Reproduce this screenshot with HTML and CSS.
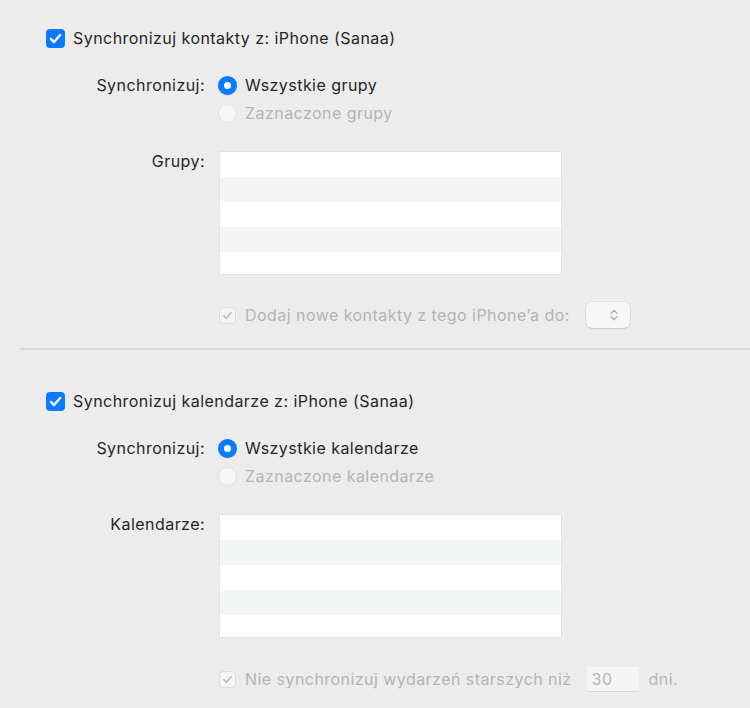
FILE: index.html
```html
<!DOCTYPE html>
<html lang="pl">
<head>
<meta charset="utf-8">
<link rel="stylesheet" href="styles.css">
</head>
<body>
<div class="page">
  <section class="section first">
    <div class="head">
      <span class="cb on"><svg viewBox="0 0 18 18"><path d="M4.6 9.4 L7.6 12.4 L13.4 5.6" /></svg></span>
      <span class="text">Synchronizuj kontakty z: iPhone (Sanaa)</span>
    </div>
    <div class="row radios">
      <div class="label">Synchronizuj:</div>
      <div class="ctrls">
        <div class="opt"><span class="radio on"></span><span class="text">Wszystkie grupy</span></div>
        <div class="opt dis"><span class="radio"></span><span class="text">Zaznaczone grupy</span></div>
      </div>
    </div>
    <div class="row listrow">
      <div class="label">Grupy:</div>
      <div class="list"><div></div><div></div><div></div><div></div><div></div></div>
    </div>
    <div class="row bottom">
      <div class="label"></div>
      <div class="opt dis">
        <span class="cb off"><svg viewBox="0 0 18 18"><path d="M4.6 9.4 L7.6 12.4 L13.4 5.6" /></svg></span>
        <span class="text">Dodaj nowe kontakty z tego iPhone’a do:</span>
        <span class="popup"><svg viewBox="0 0 10 14"><path d="M2 5.2 L5 2.2 L8 5.2 M2 8.8 L5 11.8 L8 8.8" /></svg></span>
      </div>
    </div>
  </section>
  <div class="divider"></div>
  <section class="section second">
    <div class="head">
      <span class="cb on"><svg viewBox="0 0 18 18"><path d="M4.6 9.4 L7.6 12.4 L13.4 5.6" /></svg></span>
      <span class="text">Synchronizuj kalendarze z: iPhone (Sanaa)</span>
    </div>
    <div class="row radios">
      <div class="label">Synchronizuj:</div>
      <div class="ctrls">
        <div class="opt"><span class="radio on"></span><span class="text">Wszystkie kalendarze</span></div>
        <div class="opt dis"><span class="radio"></span><span class="text">Zaznaczone kalendarze</span></div>
      </div>
    </div>
    <div class="row listrow">
      <div class="label">Kalendarze:</div>
      <div class="list"><div></div><div></div><div></div><div></div><div></div></div>
    </div>
    <div class="row bottom">
      <div class="label"></div>
      <div class="opt dis">
        <span class="cb off"><svg viewBox="0 0 18 18"><path d="M4.6 9.4 L7.6 12.4 L13.4 5.6" /></svg></span>
        <span class="text">Nie synchronizuj wydarzeń starszych niż</span>
        <span class="field">30</span>
        <span class="text days">dni.</span>
      </div>
    </div>
  </section>
</div>
</body>
</html>
```
FILE: styles.css
```css
html, body {
  margin: 0;
  padding: 0;
  background: #ececec;
}
.page {
  width: 750px;
  height: 708px;
  overflow: hidden;
  font-family: Inter, "Noto Sans", "Liberation Sans", sans-serif;
  font-size: 16px;
  letter-spacing: 0.45px;
  color: #262626;
}
.section.first { padding-top: 27px; }
.section.second { padding-top: 40px; }
.head {
  display: flex;
  align-items: center;
  height: 22px;
  padding-left: 46px;
}
.head .cb { margin-right: 8px; }
.row { display: flex; }
.label {
  width: 205px;
  flex: none;
  text-align: right;
  margin-right: 14px;
  line-height: 28px;
  letter-spacing: 0.45px;
}
.radios { margin-top: 22px; }
.ctrls { display: flex; flex-direction: column; }
.opt {
  display: flex;
  align-items: center;
  height: 28px;
}
.opt .text { white-space: nowrap; }
.opt.dis { color: #b4b4b4; }
.radio {
  width: 19px;
  height: 19px;
  box-sizing: border-box;
  border-radius: 50%;
  margin-right: 8px;
  margin-left: -1px;
  background: #f6f6f6;
  border: 1px solid #e1e1e1;
}
.radio.on {
  border: 6px solid #0a7aff;
  background: #fff;
  box-shadow: 0 0.5px 1px rgba(0,0,0,0.15);
}
.cb {
  width: 19px;
  height: 19px;
  box-sizing: border-box;
  border-radius: 4px;
  display: flex;
  flex: none;
}
.cb svg { width: 19px; height: 19px; }
.cb path { fill: none; stroke-linecap: round; stroke-linejoin: round; }
.cb.on { background: #0a7aff; }
.cb.on path { stroke: #fff; stroke-width: 2.2; }
.cb.off {
  width: 17px;
  height: 17px;
  background: #f4f4f4;
  border: 1px solid #dcdcdc;
  margin-right: 9px;
}
.cb.off svg { width: 15px; height: 15px; }
.cb.off path { stroke: #b8b8b8; stroke-width: 1.8; }
.listrow { margin-top: 24px; }
.listrow .label { line-height: 20px; }
.list {
  width: 343px;
  height: 124px;
  box-sizing: border-box;
  border: 1px solid #e3e3e3;
  background: #fff;
  overflow: hidden;
}
.list div { height: 25px; }
.list div:nth-child(even) { background: #f4f5f5; }
.first .bottom { margin-top: 26px; }
.second .bottom { margin-top: 27px; }
.popup {
  width: 44px;
  height: 26px;
  box-sizing: border-box;
  margin-left: 16px;
  border-radius: 6px;
  background: #f7f7f7;
  box-shadow: 0 0 0 0.5px rgba(0,0,0,0.08), 0 1px 1.5px rgba(0,0,0,0.12);
  display: flex;
  align-items: center;
  justify-content: flex-end;
  padding-right: 11px;
}
.popup svg { width: 10px; height: 14px; }
.popup path { fill: none; stroke: #b0b0b0; stroke-width: 1.4; stroke-linecap: round; stroke-linejoin: round; }
.field {
  width: 52px;
  height: 24px;
  box-sizing: border-box;
  margin-left: 15px;
  background: #f5f5f5;
  box-shadow: 0 1px 0 rgba(0,0,0,0.08);
  padding-left: 5px;
  line-height: 24px;
  color: #b4b4b4;
}
.days { margin-left: 10px; }
.divider {
  margin-top: 19px;
  margin-left: 20px;
  height: 2px;
  background: #d8d8d8;
}
```
